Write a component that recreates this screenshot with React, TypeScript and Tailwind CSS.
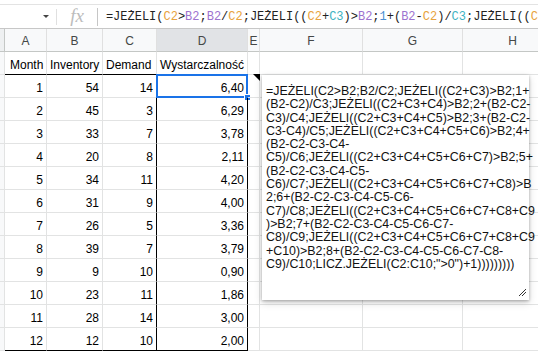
import React from 'react';

const cols = [
  { k: 'A', w: 'w-[42px]' },
  { k: 'B', w: 'w-[56px]' },
  { k: 'C', w: 'w-[54px]' },
  { k: 'D', w: 'w-[91px]' },
  { k: 'E', w: 'w-[12px]' },
  { k: 'F', w: 'w-[103px]' },
  { k: 'G', w: 'w-[100px]' },
  { k: 'H', w: 'w-[100px]' },
];

const data: [number, number, number, string][] = [
  [1, 54, 14, '6,40'],
  [2, 45, 3, '6,29'],
  [3, 33, 7, '3,78'],
  [4, 20, 8, '2,11'],
  [5, 34, 11, '4,20'],
  [6, 31, 9, '4,00'],
  [7, 26, 5, '3,36'],
  [8, 39, 7, '3,79'],
  [9, 9, 10, '0,90'],
  [10, 23, 11, '1,86'],
  [11, 28, 14, '3,00'],
  [12, 12, 10, '2,00'],
];

const OR = 'text-[#e8a33d]';
const PU = 'text-[#9d72cf]';
const TE = 'text-[#3fb3c2]';
const NU = 'text-[#4a8fd1]';

// formula bar: [text, colour]
const formula: [string, string][] = [
  ['=JEŻELI(', ''], ['C2', OR], ['>', ''], ['B2', PU], [';', ''], ['B2', PU], ['/', ''], ['C2', OR],
  [';JEŻELI((', ''], ['C2', OR], ['+', ''], ['C3', TE], [')>', ''], ['B2', PU], [';', ''], ['1', NU],
  ['+(', ''], ['B2', PU], ['-', ''], ['C2', OR], [')/', ''], ['C3', TE], [';JEŻELI((', ''], ['C', OR],
];

const noteLines = [
  '=JEŻELI(C2>B2;B2/C2;JEŻELI((C2+C3)>B2;1+',
  '(B2-C2)/C3;JEŻELI((C2+C3+C4)>B2;2+(B2-C2-',
  'C3)/C4;JEŻELI((C2+C3+C4+C5)>B2;3+(B2-C2-',
  'C3-C4)/C5;JEŻELI((C2+C3+C4+C5+C6)>B2;4+',
  '(B2-C2-C3-C4-',
  'C5)/C6;JEŻELI((C2+C3+C4+C5+C6+C7)>B2;5+',
  '(B2-C2-C3-C4-C5-',
  'C6)/C7;JEŻELI((C2+C3+C4+C5+C6+C7+C8)>B',
  '2;6+(B2-C2-C3-C4-C5-C6-',
  'C7)/C8;JEŻELI((C2+C3+C4+C5+C6+C7+C8+C9',
  ')>B2;7+(B2-C2-C3-C4-C5-C6-C7-',
  'C8)/C9;JEŻELI((C2+C3+C4+C5+C6+C7+C8+C9',
  '+C10)>B2;8+(B2-C2-C3-C4-C5-C6-C7-C8-',
  'C9)/C10;LICZ.JEŻELI(C2:C10;">0")+1)))))))))',
];

function Cell({ r, c }: { r: number; c: number }) {
  const inTable = c <= 3;
  const blackBottom = inTable && (r === 0 || r === 12);
  const blackRight = r >= 1 && (c === 2 || c === 3);
  const bb = blackBottom ? 'border-b-black' : 'border-b-[#e2e3e3]';
  const br = blackRight ? 'border-r-black' : 'border-r-[#e2e3e3]';

  let text: string | number = '';
  if (r === 0 && inTable) text = ['Month', 'Inventory', 'Demand', 'Wystarczalność'][c];
  else if (r > 0 && inTable) text = data[r - 1][c];

  return (
    <div
      className={`${cols[c].w} shrink-0 h-[23px] border-r border-b ${bb} ${br} relative px-[3px] pt-[4px] leading-[18px] whitespace-nowrap ${
        r === 0 ? 'text-left' : 'text-right'
      } ${r === 0 && c === 0 ? 'pl-[5px]' : ''}`}
    >
      {text}
      {r === 1 && c === 3 && (
        <>
          <div className="absolute -left-px -top-px -right-px -bottom-px border-2 border-[#1a73e8]" />
          <div className="absolute -right-[4px] -bottom-[4px] w-[7px] h-[7px] bg-[#1a73e8] border border-white" />
        </>
      )}
      {r === 1 && c === 4 && (
        <div className="absolute right-[-1px] top-[-1px] w-0 h-0 border-l-[7px] border-l-transparent border-t-[7px] border-t-black" />
      )}
    </div>
  );
}

export default function App() {
  return (
    <div className="w-[538px] h-[354px] overflow-hidden bg-white relative font-['Liberation_Sans',Arial,sans-serif] text-[12px] text-black">
      {/* formula bar */}
      <div className="h-[25px] mt-[4px] border-t border-t-[#e3e3e3] border-b border-b-[#c7c7c7] flex items-center">
        <div className="w-[62px] h-full flex items-center justify-end pr-[7px]">
          <div className="w-0 h-0 border-l-[3px] border-l-transparent border-r-[3px] border-r-transparent border-t-[3px] border-t-[#444]" />
        </div>
        <div className="w-px h-[16px] bg-[#e0e0e0]" />
        <div className="w-[44px] flex items-center justify-center font-['Liberation_Serif',serif] italic text-[19px] leading-none text-[#bcbcbc] pb-[2px]">
          fx
        </div>
        <div className="w-px h-[18px] bg-[#c6c6c6]" />
        <div className="pl-[8px] font-['Liberation_Mono',monospace] text-[12px] whitespace-nowrap text-[#222]">
          {formula.map(([t, cl], i) => (
            <span key={i} className={cl}>
              {t}
            </span>
          ))}
        </div>
      </div>

      {/* column headers */}
      <div className="flex h-[23px] bg-[#f8f9fa] text-[#444746]">
        <div className="w-[5px] shrink-0 border-r border-b border-[#c4c7c5] bg-[#eef0f1]" />
        {cols.map((c, i) => (
          <div
            key={c.k}
            className={`${c.w} shrink-0 border-r border-b border-r-[#e0e0e0] border-b-[#c4c7c5] flex items-center justify-center pt-[2px] ${
              i === 3 ? 'bg-[#e1e3e6]' : ''
            }`}
          >
            {c.k}
          </div>
        ))}
      </div>

      {/* rows */}
      {Array.from({ length: 13 }).map((_, r) => (
        <div key={r} className="flex">
          <div className="w-[5px] shrink-0 h-[23px] border-r border-b border-[#e2e3e3] bg-[#f8f9fa]" />
          {cols.map((c, ci) => (
            <Cell key={c.k} r={r} c={ci} />
          ))}
        </div>
      ))}

      {/* note */}
      <div className="absolute left-[262px] top-[75px] w-[267px] h-[225px] bg-white shadow-[0_1px_3px_rgba(0,0,0,0.3),0_3px_8px_rgba(0,0,0,0.15)] pl-[4px] pt-[10px] text-[12.4px] leading-[13.3px] text-[#111]">
        {noteLines.map((l, i) => (
          <div key={i} className="whitespace-nowrap">
            {l}
          </div>
        ))}
        <svg className="absolute right-[2px] bottom-[3px]" width="9" height="9" viewBox="0 0 9 9">
          <path d="M1 8 L8 1 M4 8 L8 4" stroke="#333" strokeWidth="1" />
        </svg>
      </div>
    </div>
  );
}
